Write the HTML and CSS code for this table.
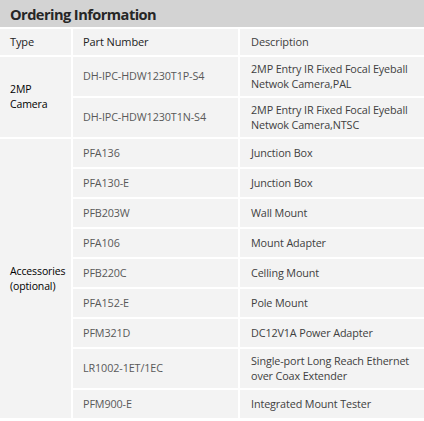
FILE: index.html
```html
<!DOCTYPE html>
<html>
<head>
<meta charset="utf-8">
<link rel="stylesheet" href="styles.css">
</head>
<body>
<div class="title">Ordering Information</div>
<div class="table">
  <div class="cell head">Type</div>
  <div class="cell head">Part Number</div>
  <div class="cell head desc">Description</div>

  <div class="cell type cam">2MP<br>Camera</div>
  <div class="cell part">DH-IPC-HDW1230T1P-S4</div>
  <div class="cell desc">2MP Entry IR Fixed Focal Eyeball<br>Netwok Camera,PAL</div>
  <div class="cell part">DH-IPC-HDW1230T1N-S4</div>
  <div class="cell desc">2MP Entry IR Fixed Focal Eyeball<br>Netwok Camera,NTSC</div>

  <div class="cell type acc">Accessories<br>(optional)</div>
  <div class="cell part">PFA136</div>
  <div class="cell desc">Junction Box</div>
  <div class="cell part">PFA130-E</div>
  <div class="cell desc">Junction Box</div>
  <div class="cell part">PFB203W</div>
  <div class="cell desc">Wall Mount</div>
  <div class="cell part">PFA106</div>
  <div class="cell desc">Mount Adapter</div>
  <div class="cell part">PFB220C</div>
  <div class="cell desc">Celling Mount</div>
  <div class="cell part">PFA152-E</div>
  <div class="cell desc">Pole Mount</div>
  <div class="cell part">PFM321D</div>
  <div class="cell desc">DC12V1A Power Adapter</div>
  <div class="cell part">LR1002-1ET/1EC</div>
  <div class="cell desc">Single-port Long Reach Ethernet<br>over Coax Extender</div>
  <div class="cell part">PFM900-E</div>
  <div class="cell desc">Integrated Mount Tester</div>
</div>
</body>
</html>
```

FILE: styles.css
```css
html, body {
  margin: 0;
  padding: 0;
  background: #ffffff;
}
body {
  font-family: "Open Sans", "Liberation Sans", sans-serif;
  width: 424px;
}
.title {
  height: 27px;
  background: #d3d3d3;
  color: #262626;
  font-weight: 700;
  font-size: 14.6px;
  line-height: 28px;
  padding-left: 10px;
  letter-spacing: -0.55px;
  margin-bottom: 2px;
}
.table {
  display: grid;
  grid-template-columns: 71px 165px 1fr;
  grid-template-rows: 26px 39px 39px repeat(7, 28px) 39px 28px;
  gap: 2px;
}
.cell {
  background: #f3f3f3;
  display: flex;
  align-items: center;
  padding-left: 10px;
  font-size: 10.8px;
  line-height: 14.5px;
  white-space: nowrap;
  letter-spacing: -0.12px;
}
.head {
  color: #222222;
  font-size: 11px;
  letter-spacing: -0.1px;
}
.type {
  grid-column: 1;
  color: #000000;
  font-size: 10.5px;
  line-height: 15px;
}
.cam { grid-row: span 2; }
.acc { grid-row: span 9; }
.part {
  color: #595959;
}
.desc {
  color: #404040;
  padding-left: 11px;
}
```
